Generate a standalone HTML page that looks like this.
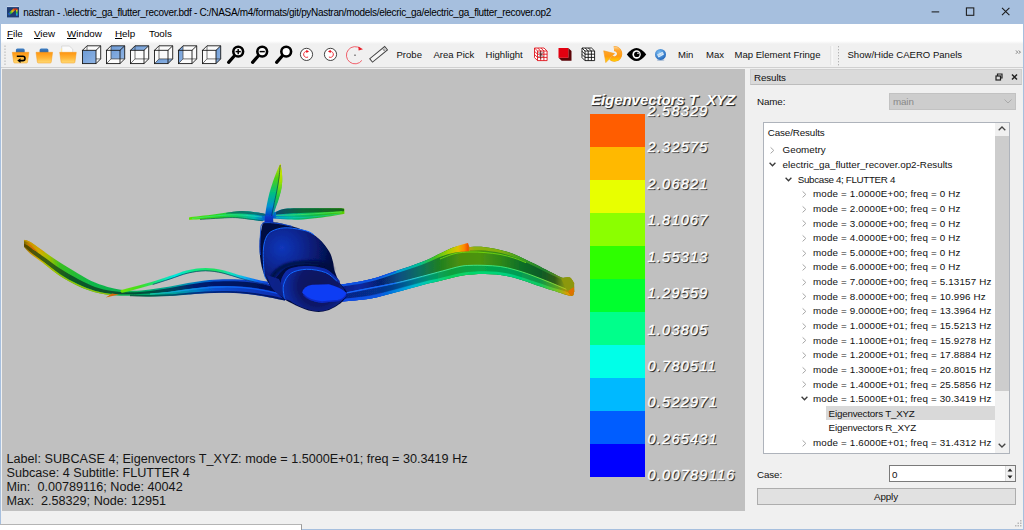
<!DOCTYPE html>
<html><head><meta charset="utf-8"><title>nastran</title>
<style>
*{box-sizing:border-box;margin:0;padding:0}
html,body{width:1024px;height:530px;overflow:hidden;background:#f0f0f0}
body{position:relative;font-family:"Liberation Sans",sans-serif;font-size:11px;color:#000}
.a{position:absolute}
.t{position:absolute;white-space:nowrap;line-height:1;transform-origin:0 0}
.mi{font-size:9.8px;top:28.8px;color:#000}
.tb{font-size:9.55px;top:50.4px;color:#111}
.vt{font-size:12.65px;color:#151515;left:6.5px}
.tr{font-size:9.8px;color:#111}
.lb{font-size:9.8px;color:#111;letter-spacing:-0.12px}
.lg{font-size:14.5px;font-style:italic;color:#fff;-webkit-text-stroke:0.35px #fff;text-shadow:1px 1px 0 #333,1px 1px 1px #333;letter-spacing:1.25px;left:647.5px}
svg{position:absolute;overflow:visible}
</style></head><body>
<div class="a" style="left:0;top:0;width:1024px;height:24px;background:#a6bfde"></div>
<div class="a" style="left:0;top:24px;width:1px;height:506px;background:#a6bfde"></div>
<div class="a" style="left:1023px;top:24px;width:1px;height:506px;background:#a6bfde"></div>
<div class="a" style="left:0;top:529px;width:1024px;height:1px;background:#a6bfde"></div>
<div class="a" style="left:1px;top:24px;width:1022px;height:18.5px;background:#fff"></div>
<div class="a" style="left:1px;top:67px;width:1022px;height:1px;background:#d0d0d0"></div>
<div class="a" style="left:1px;top:41px;width:1022px;height:3px;background:linear-gradient(#fff,#f0f0f0)"></div>
<div class="a" style="left:0;top:524px;width:302px;height:6px;background:#fff;border-top:1px solid #b4b4b4;border-right:1px solid #9a9a9a"></div>
<svg style="left:7px;top:5.6px" width="12" height="11.4" viewBox="0 0 12 11.4"><defs><linearGradient id="ti1" gradientUnits="userSpaceOnUse" x1="1" y1="9" x2="8" y2="2.5"><stop offset="0" stop-color="#2a9a30"/><stop offset="0.15" stop-color="#2040e0"/><stop offset="0.35" stop-color="#28b830"/><stop offset="0.6" stop-color="#d8c818"/><stop offset="0.85" stop-color="#e06010"/><stop offset="1" stop-color="#d02818"/></linearGradient><linearGradient id="ti2" gradientUnits="userSpaceOnUse" x1="0" y1="2.8" x2="0" y2="10"><stop offset="0" stop-color="#e03018"/><stop offset="0.25" stop-color="#e0c818"/><stop offset="0.5" stop-color="#30c030"/><stop offset="0.75" stop-color="#20b8c8"/><stop offset="1" stop-color="#2050e0"/></linearGradient></defs><rect width="12" height="11.4" fill="#1e3c74"/><rect width="12" height="1.1" fill="#c4d4ec"/><path d="M1.4 9L7.6 3.2" stroke="url(#ti1)" stroke-width="2.4" fill="none"/><path d="M9.8 2.8V10" stroke="url(#ti2)" stroke-width="1.7" fill="none"/><path d="M7.4 3L9.8 3.2" stroke="#d83018" stroke-width="1.4" fill="none"/></svg>
<div class="t" style="left:23.3px;top:7.5px;font-size:10px;letter-spacing:-0.315px;color:#000">nastran - .\electric_ga_flutter_recover.bdf - C:/NASA/m4/formats/git/pyNastran/models/elecric_ga/electric_ga_flutter_recover.op2</div>
<svg style="left:920px;top:0" width="104" height="24" viewBox="0 0 104 24" fill="none" stroke="#1a1a1a" stroke-width="1.05"><path d="M11.6 11.9H19.2"/><rect x="46.4" y="7.9" width="7.4" height="7.4"/><path d="M82 7.8l7.4 7.4M89.4 7.8l-7.4 7.4"/></svg>
<div class="t mi" style="left:7px"><u>F</u>ile</div>
<div class="t mi" style="left:34px"><u>V</u>iew</div>
<div class="t mi" style="left:67px"><u>W</u>indow</div>
<div class="t mi" style="left:115px"><u>H</u>elp</div>
<div class="t mi" style="left:149px">Tools</div>
<div class="t tb" style="left:396.5px">Probe</div>
<div class="t tb" style="left:433.5px">Area Pick</div>
<div class="t tb" style="left:485.5px">Highlight</div>
<div class="t tb" style="left:678px">Min</div>
<div class="t tb" style="left:706px">Max</div>
<div class="t tb" style="left:734.5px">Map Element Fringe</div>
<div class="t tb" style="left:847.5px">Show/Hide CAERO Panels</div>
<div class="a" id="view" style="left:2px;top:69px;width:743px;height:442px;background:#c0c0c0"></div>
<div class="a" style="left:590px;top:114px;width:55px;height:33px;background:#ff5d00"></div>
<div class="a" style="left:590px;top:147px;width:55px;height:33px;background:#ffb900"></div>
<div class="a" style="left:590px;top:180px;width:55px;height:33px;background:#e8ff00"></div>
<div class="a" style="left:590px;top:213px;width:55px;height:33px;background:#8bff00"></div>
<div class="a" style="left:590px;top:246px;width:55px;height:33px;background:#2eff00"></div>
<div class="a" style="left:590px;top:279px;width:55px;height:33px;background:#00ff2e"></div>
<div class="a" style="left:590px;top:312px;width:55px;height:33px;background:#00ff8b"></div>
<div class="a" style="left:590px;top:345px;width:55px;height:33px;background:#00ffe8"></div>
<div class="a" style="left:590px;top:378px;width:55px;height:33px;background:#00b9ff"></div>
<div class="a" style="left:590px;top:411px;width:55px;height:33px;background:#005dff"></div>
<div class="a" style="left:590px;top:444px;width:55px;height:33px;background:#0000ff"></div>
<div class="t" style="left:591px;top:91.6px;font-size:15px;font-weight:bold;font-style:italic;color:#fff;text-shadow:1px 1px 0 #333,1px 1px 1px #333;letter-spacing:-0.05px">Eigenvectors T_XYZ</div>
<div class="t lg" style="top:104.0px">2.58329</div>
<div class="t lg" style="top:140.4px">2.32575</div>
<div class="t lg" style="top:176.8px">2.06821</div>
<div class="t lg" style="top:213.3px">1.81067</div>
<div class="t lg" style="top:249.7px">1.55313</div>
<div class="t lg" style="top:286.1px">1.29559</div>
<div class="t lg" style="top:322.5px">1.03805</div>
<div class="t lg" style="top:358.9px">0.780511</div>
<div class="t lg" style="top:395.4px">0.522971</div>
<div class="t lg" style="top:431.8px">0.265431</div>
<div class="t lg" style="top:468.2px">0.00789116</div>
<div class="t vt" style="top:452.5px">Label: SUBCASE 4; Eigenvectors T_XYZ: mode = 1.5000E+01; freq = 30.3419 Hz</div>
<div class="t vt" style="top:466.6px">Subcase: 4 Subtitle: FLUTTER 4</div>
<div class="t vt" style="top:480.6px">Min:&nbsp; 0.00789116; Node: 40042</div>
<div class="t vt" style="top:494.7px">Max:&nbsp; 2.58329; Node: 12951</div>
<div class="a" style="left:750px;top:69px;width:272px;height:16px;background:#dadada;border:1px solid #cfcfcf;border-bottom-color:#bdbdbd"></div>
<div class="t lb" style="left:754px;top:72.5px">Results</div>
<svg style="left:992px;top:71px" width="28" height="12" viewBox="0 0 28 12" fill="none" stroke="#222" stroke-width="1.2"><rect x="4" y="5" width="4.5" height="4"/><path d="M5.5 5V3H10V7H8.5"/><path d="M20 3.5l5 5M25 3.5l-5 5" stroke-width="1.5"/></svg>
<div class="t lb" style="left:757px;top:97px">Name:</div>
<div class="a" style="left:889px;top:93px;width:127px;height:17px;background:#cdcdcd;border:1px solid #c2c2c2"></div>
<div class="t lb" style="left:893px;top:97px;color:#888">main</div>
<svg style="left:1004px;top:99px" width="8" height="5" viewBox="0 0 8 5" fill="none" stroke="#aaa" stroke-width="1"><path d="M0.5 0.5l3.5 3.5l3.5-3.5"/></svg>
<div class="a" style="left:763px;top:122px;width:247px;height:332px;background:#fff;border:1px solid #aeb3bb"></div>
<div class="t tr" style="left:767.8px;top:128px;letter-spacing:-0.12px">Case/Results</div>
<div class="t tr" style="left:782.6px;top:145.4px;letter-spacing:0px">Geometry</div>
<svg style="left:769.7px;top:147.1px" width="5" height="7" viewBox="0 0 5 7" fill="none" stroke="#a6a6a6" stroke-width="1"><path d="M0.6 0.4l3.2 3l-3.2 3"/></svg>
<div class="t tr" style="left:782.6px;top:160.0px;letter-spacing:0px">electric_ga_flutter_recover.op2-Results</div>
<svg style="left:768.9px;top:162.1px" width="7" height="5" viewBox="0 0 7 5" fill="none" stroke="#3a3a3a" stroke-width="1.3"><path d="M0.6 0.7l2.9 3l2.9-3"/></svg>
<div class="t tr" style="left:797.8px;top:174.7px;letter-spacing:-0.34px">Subcase 4; FLUTTER 4</div>
<svg style="left:784.8px;top:176.8px" width="7" height="5" viewBox="0 0 7 5" fill="none" stroke="#3a3a3a" stroke-width="1.3"><path d="M0.6 0.7l2.9 3l2.9-3"/></svg>
<div class="t tr" style="left:813.0px;top:189.3px;letter-spacing:0.17px">mode = 1.0000E+00; freq = 0 Hz</div>
<svg style="left:801.5px;top:191.0px" width="5" height="7" viewBox="0 0 5 7" fill="none" stroke="#a6a6a6" stroke-width="1"><path d="M0.6 0.4l3.2 3l-3.2 3"/></svg>
<div class="t tr" style="left:813.0px;top:203.9px;letter-spacing:0.17px">mode = 2.0000E+00; freq = 0 Hz</div>
<svg style="left:801.5px;top:205.6px" width="5" height="7" viewBox="0 0 5 7" fill="none" stroke="#a6a6a6" stroke-width="1"><path d="M0.6 0.4l3.2 3l-3.2 3"/></svg>
<div class="t tr" style="left:813.0px;top:218.6px;letter-spacing:0.17px">mode = 3.0000E+00; freq = 0 Hz</div>
<svg style="left:801.5px;top:220.2px" width="5" height="7" viewBox="0 0 5 7" fill="none" stroke="#a6a6a6" stroke-width="1"><path d="M0.6 0.4l3.2 3l-3.2 3"/></svg>
<div class="t tr" style="left:813.0px;top:233.2px;letter-spacing:0.17px">mode = 4.0000E+00; freq = 0 Hz</div>
<svg style="left:801.5px;top:234.9px" width="5" height="7" viewBox="0 0 5 7" fill="none" stroke="#a6a6a6" stroke-width="1"><path d="M0.6 0.4l3.2 3l-3.2 3"/></svg>
<div class="t tr" style="left:813.0px;top:247.8px;letter-spacing:0.17px">mode = 5.0000E+00; freq = 0 Hz</div>
<svg style="left:801.5px;top:249.5px" width="5" height="7" viewBox="0 0 5 7" fill="none" stroke="#a6a6a6" stroke-width="1"><path d="M0.6 0.4l3.2 3l-3.2 3"/></svg>
<div class="t tr" style="left:813.0px;top:262.4px;letter-spacing:0.17px">mode = 6.0000E+00; freq = 0 Hz</div>
<svg style="left:801.5px;top:264.1px" width="5" height="7" viewBox="0 0 5 7" fill="none" stroke="#a6a6a6" stroke-width="1"><path d="M0.6 0.4l3.2 3l-3.2 3"/></svg>
<div class="t tr" style="left:813.0px;top:277.1px;letter-spacing:0.17px">mode = 7.0000E+00; freq = 5.13157 Hz</div>
<svg style="left:801.5px;top:278.8px" width="5" height="7" viewBox="0 0 5 7" fill="none" stroke="#a6a6a6" stroke-width="1"><path d="M0.6 0.4l3.2 3l-3.2 3"/></svg>
<div class="t tr" style="left:813.0px;top:291.7px;letter-spacing:0.17px">mode = 8.0000E+00; freq = 10.996 Hz</div>
<svg style="left:801.5px;top:293.4px" width="5" height="7" viewBox="0 0 5 7" fill="none" stroke="#a6a6a6" stroke-width="1"><path d="M0.6 0.4l3.2 3l-3.2 3"/></svg>
<div class="t tr" style="left:813.0px;top:306.3px;letter-spacing:0.17px">mode = 9.0000E+00; freq = 13.3964 Hz</div>
<svg style="left:801.5px;top:308.0px" width="5" height="7" viewBox="0 0 5 7" fill="none" stroke="#a6a6a6" stroke-width="1"><path d="M0.6 0.4l3.2 3l-3.2 3"/></svg>
<div class="t tr" style="left:813.0px;top:321.0px;letter-spacing:0.17px">mode = 1.0000E+01; freq = 15.5213 Hz</div>
<svg style="left:801.5px;top:322.7px" width="5" height="7" viewBox="0 0 5 7" fill="none" stroke="#a6a6a6" stroke-width="1"><path d="M0.6 0.4l3.2 3l-3.2 3"/></svg>
<div class="t tr" style="left:813.0px;top:335.6px;letter-spacing:0.17px">mode = 1.1000E+01; freq = 15.9278 Hz</div>
<svg style="left:801.5px;top:337.3px" width="5" height="7" viewBox="0 0 5 7" fill="none" stroke="#a6a6a6" stroke-width="1"><path d="M0.6 0.4l3.2 3l-3.2 3"/></svg>
<div class="t tr" style="left:813.0px;top:350.2px;letter-spacing:0.17px">mode = 1.2000E+01; freq = 17.8884 Hz</div>
<svg style="left:801.5px;top:351.9px" width="5" height="7" viewBox="0 0 5 7" fill="none" stroke="#a6a6a6" stroke-width="1"><path d="M0.6 0.4l3.2 3l-3.2 3"/></svg>
<div class="t tr" style="left:813.0px;top:364.9px;letter-spacing:0.17px">mode = 1.3000E+01; freq = 20.8015 Hz</div>
<svg style="left:801.5px;top:366.6px" width="5" height="7" viewBox="0 0 5 7" fill="none" stroke="#a6a6a6" stroke-width="1"><path d="M0.6 0.4l3.2 3l-3.2 3"/></svg>
<div class="t tr" style="left:813.0px;top:379.5px;letter-spacing:0.17px">mode = 1.4000E+01; freq = 25.5856 Hz</div>
<svg style="left:801.5px;top:381.2px" width="5" height="7" viewBox="0 0 5 7" fill="none" stroke="#a6a6a6" stroke-width="1"><path d="M0.6 0.4l3.2 3l-3.2 3"/></svg>
<div class="t tr" style="left:813.0px;top:394.1px;letter-spacing:0.17px">mode = 1.5000E+01; freq = 30.3419 Hz</div>
<svg style="left:800.7px;top:396.2px" width="7" height="5" viewBox="0 0 7 5" fill="none" stroke="#3a3a3a" stroke-width="1.3"><path d="M0.6 0.7l2.9 3l2.9-3"/></svg>
<div class="a" style="left:826px;top:406.2px;width:169px;height:13.4px;background:#d9d9d9"></div>
<div class="t tr" style="left:828.6px;top:408.7px;letter-spacing:-0.2px">Eigenvectors T_XYZ</div>
<div class="t tr" style="left:828.6px;top:423.4px;letter-spacing:-0.2px">Eigenvectors R_XYZ</div>
<div class="t tr" style="left:813.0px;top:438.0px;letter-spacing:0.17px">mode = 1.6000E+01; freq = 31.4312 Hz</div>
<svg style="left:801.5px;top:439.7px" width="5" height="7" viewBox="0 0 5 7" fill="none" stroke="#a6a6a6" stroke-width="1"><path d="M0.6 0.4l3.2 3l-3.2 3"/></svg>
<div class="a" style="left:995px;top:123px;width:14px;height:330px;background:#f0f0f0"></div>
<div class="a" style="left:995px;top:136px;width:14px;height:255px;background:#cdcdcd"></div>
<svg style="left:998px;top:126px" width="8" height="5" viewBox="0 0 8 5" fill="none" stroke="#444" stroke-width="1.3"><path d="M0.7 4.3l3.3-3.3l3.3 3.3"/></svg>
<svg style="left:998px;top:443px" width="8" height="5" viewBox="0 0 8 5" fill="none" stroke="#444" stroke-width="1.3"><path d="M0.7 0.7l3.3 3.3l3.3-3.3"/></svg>
<div class="t lb" style="left:757px;top:469.5px">Case:</div>
<div class="a" style="left:889px;top:465px;width:127px;height:17px;background:#fff;border:1px solid #7a7a7a"></div>
<div class="t lb" style="left:892px;top:469.5px">0</div>
<div class="a" style="left:1005px;top:466px;width:10px;height:15px;background:#f0f0f0;border-left:1px solid #ddd"></div>
<svg style="left:1007px;top:468px" width="6" height="11" viewBox="0 0 6 11" fill="#222"><path d="M3 0.5l2.5 3h-5zM3 10.5l2.5-3h-5z"/></svg>
<div class="a" style="left:757px;top:488px;width:259px;height:17px;background:#e1e1e1;border:1px solid #adadad"></div>
<div class="t lb" style="left:874px;top:492px">Apply</div>
<svg style="left:1014px;top:520px" width="8" height="8" viewBox="0 0 8 8" fill="#b8b8b8"><rect x="6" y="0" width="1.5" height="1.5"/><rect x="3.5" y="2.5" width="1.5" height="1.5"/><rect x="6" y="2.5" width="1.5" height="1.5"/><rect x="1" y="5" width="1.5" height="1.5"/><rect x="3.5" y="5" width="1.5" height="1.5"/><rect x="6" y="5" width="1.5" height="1.5"/></svg>
<svg style="left:0;top:43px" width="1024" height="26" viewBox="0 43 1024 26"><defs>
<linearGradient id="fo" x1="0" y1="0" x2="0" y2="1"><stop offset="0" stop-color="#ff9410"/><stop offset="0.55" stop-color="#ffb638"/><stop offset="1" stop-color="#ffdc78"/></linearGradient>
<linearGradient id="bl" x1="0" y1="0" x2="0" y2="1"><stop offset="0" stop-color="#3f7fc4"/><stop offset="1" stop-color="#2a5e9c"/></linearGradient>
<linearGradient id="cb" x1="0" y1="0" x2="1" y2="1"><stop offset="0" stop-color="#6d9bd6"/><stop offset="1" stop-color="#8fb4e4"/></linearGradient>
<linearGradient id="oa" gradientUnits="userSpaceOnUse" x1="0" y1="46" x2="0" y2="63"><stop offset="0" stop-color="#ffd9a0"/><stop offset="0.25" stop-color="#ffa630"/><stop offset="0.6" stop-color="#ff9a10"/><stop offset="1" stop-color="#ffe000"/></linearGradient>
<radialGradient id="gl" cx="0.4" cy="0.35" r="0.7"><stop offset="0" stop-color="#7fc0f4"/><stop offset="1" stop-color="#1c62b8"/></radialGradient>
</defs><rect x="4.5" y="45.5" width="1" height="1.4" fill="#b0b0b0"/><rect x="4.5" y="48.5" width="1" height="1.4" fill="#b0b0b0"/><rect x="4.5" y="51.5" width="1" height="1.4" fill="#b0b0b0"/><rect x="4.5" y="54.5" width="1" height="1.4" fill="#b0b0b0"/><rect x="4.5" y="57.5" width="1" height="1.4" fill="#b0b0b0"/><rect x="4.5" y="60.5" width="1" height="1.4" fill="#b0b0b0"/><rect x="4.5" y="63.5" width="1" height="1.4" fill="#b0b0b0"/><rect x="838" y="46" width="1" height="1.4" fill="#b4b4b4"/><rect x="838" y="49" width="1" height="1.4" fill="#b4b4b4"/><rect x="838" y="52" width="1" height="1.4" fill="#b4b4b4"/><rect x="838" y="55" width="1" height="1.4" fill="#b4b4b4"/><rect x="838" y="58" width="1" height="1.4" fill="#b4b4b4"/><rect x="838" y="61" width="1" height="1.4" fill="#b4b4b4"/><rect x="838" y="64" width="1" height="1.4" fill="#b4b4b4"/><rect x="830.5" y="46" width="1" height="19" fill="#d8d8d8"/><rect x="831.5" y="46" width="1" height="19" fill="#fff"/><path d="M15.9 53V50q0-1.5 1.5-1.5h5.8q1.5 0 1.5 1.5V53z" fill="url(#bl)"/><path d="M12.3 52.3H28.900000000000002L27.5 62.2q-.1 .8-1 .8H14.700000000000001q-.9 0-1-.8z" fill="url(#fo)" stroke="#f59a1c" stroke-width="0.5"/><path d="M16.8 56.2H22.8q2.2 0 2.2 2.2t-2.2 2.2H19.8" fill="none" stroke="#000" stroke-width="1.6"/><path d="M20.5 58.3v4.6l-3.2-2.3z" fill="#000"/><path d="M39.6 53V50q0-1.5 1.5-1.5h5.8q1.5 0 1.5 1.5V53z" fill="url(#bl)"/><path d="M36 52.3H52.6L51.2 62.2q-.1 .8-1 .8H38.4q-.9 0-1-.8z" fill="url(#fo)" stroke="#f59a1c" stroke-width="0.5"/><path d="M61.7 53V46h7.5l3.5 3V53z" fill="#fbfbfb" stroke="#cfcfcf" stroke-width="0.7"/><path d="M60.900000000000006 53V48.5h1.2V53z" fill="#ffe9a0"/><path d="M59.7 52.3H76.30000000000001L74.9 62.2q-.1 .8-1 .8H62.1q-.9 0-1-.8z" fill="url(#fo)" stroke="#f59a1c" stroke-width="0.5"/><polygon points="82.5,50.3 87,45.8 100.7,45.8 100.7,58.9 96,63.599999999999994 82.5,63.599999999999994" fill="#fbfbfb"/><g fill="none" stroke="#3a3a3a" stroke-width="0.7"><path d="M87 45.8V58.9H100.7M82.5 63.599999999999994L87 58.9"/></g><polygon points="82.5,50.3 96,50.3 96,63.599999999999994 82.5,63.599999999999994" fill="url(#cb)"/><g fill="none" stroke="#1a1a1a" stroke-width="0.9"><rect x="82.5" y="50.3" width="13.5" height="13.299999999999997"/><path d="M82.5 50.3L87 45.8M96 50.3L100.7 45.8M96 63.599999999999994L100.7 58.9"/><path d="M87 45.8H100.7V58.9"/></g><polygon points="106.5,50.3 111,45.8 124.7,45.8 124.7,58.9 120,63.599999999999994 106.5,63.599999999999994" fill="#fbfbfb"/><polygon points="111,45.8 124.7,45.8 124.7,58.9 111,58.9" fill="url(#cb)"/><g fill="none" stroke="#3a3a3a" stroke-width="0.7"><path d="M111 45.8V58.9H124.7M106.5 63.599999999999994L111 58.9"/></g><g fill="none" stroke="#1a1a1a" stroke-width="0.9"><rect x="106.5" y="50.3" width="13.5" height="13.299999999999997"/><path d="M106.5 50.3L111 45.8M120 50.3L124.7 45.8M120 63.599999999999994L124.7 58.9"/><path d="M111 45.8H124.7V58.9"/></g><polygon points="130.5,50.3 135,45.8 148.7,45.8 148.7,58.9 144,63.599999999999994 130.5,63.599999999999994" fill="#fbfbfb"/><polygon points="130.5,50.3 144,50.3 148.7,45.8 135,45.8" fill="url(#cb)"/><g fill="none" stroke="#3a3a3a" stroke-width="0.7"><path d="M135 45.8V58.9H148.7M130.5 63.599999999999994L135 58.9"/></g><g fill="none" stroke="#1a1a1a" stroke-width="0.9"><rect x="130.5" y="50.3" width="13.5" height="13.299999999999997"/><path d="M130.5 50.3L135 45.8M144 50.3L148.7 45.8M144 63.599999999999994L148.7 58.9"/><path d="M135 45.8H148.7V58.9"/></g><polygon points="154.5,50.3 159,45.8 172.7,45.8 172.7,58.9 168,63.599999999999994 154.5,63.599999999999994" fill="#fbfbfb"/><polygon points="154.5,63.599999999999994 168,63.599999999999994 172.7,58.9 159,58.9" fill="url(#cb)"/><g fill="none" stroke="#3a3a3a" stroke-width="0.7"><path d="M159 45.8V58.9H172.7M154.5 63.599999999999994L159 58.9"/></g><g fill="none" stroke="#1a1a1a" stroke-width="0.9"><rect x="154.5" y="50.3" width="13.5" height="13.299999999999997"/><path d="M154.5 50.3L159 45.8M168 50.3L172.7 45.8M168 63.599999999999994L172.7 58.9"/><path d="M159 45.8H172.7V58.9"/></g><polygon points="178.5,50.3 183,45.8 196.7,45.8 196.7,58.9 192,63.599999999999994 178.5,63.599999999999994" fill="#fbfbfb"/><polygon points="178.5,50.3 183,45.8 183,58.9 178.5,63.599999999999994" fill="url(#cb)"/><g fill="none" stroke="#3a3a3a" stroke-width="0.7"><path d="M183 45.8V58.9H196.7M178.5 63.599999999999994L183 58.9"/></g><g fill="none" stroke="#1a1a1a" stroke-width="0.9"><rect x="178.5" y="50.3" width="13.5" height="13.299999999999997"/><path d="M178.5 50.3L183 45.8M192 50.3L196.7 45.8M192 63.599999999999994L196.7 58.9"/><path d="M183 45.8H196.7V58.9"/></g><polygon points="202.5,50.3 207,45.8 220.7,45.8 220.7,58.9 216,63.599999999999994 202.5,63.599999999999994" fill="#fbfbfb"/><polygon points="216,50.3 220.7,45.8 220.7,58.9 216,63.599999999999994" fill="url(#cb)"/><g fill="none" stroke="#3a3a3a" stroke-width="0.7"><path d="M207 45.8V58.9H220.7M202.5 63.599999999999994L207 58.9"/></g><g fill="none" stroke="#1a1a1a" stroke-width="0.9"><rect x="202.5" y="50.3" width="13.5" height="13.299999999999997"/><path d="M202.5 50.3L207 45.8M216 50.3L220.7 45.8M216 63.599999999999994L220.7 58.9"/><path d="M207 45.8H220.7V58.9"/></g><path d="M234.0 56.2L228.6 62.400000000000006" stroke="#000" stroke-width="3.2" stroke-linecap="round"/><circle cx="238.2" cy="51.6" r="4.9" fill="#fff" stroke="#000" stroke-width="2.6"/><path d="M235.6 51.6H240.79999999999998" stroke="#000" stroke-width="1.5"/><path d="M238.2 49.0V54.2" stroke="#000" stroke-width="1.5"/><path d="M258.0 56.2L252.6 62.400000000000006" stroke="#000" stroke-width="3.2" stroke-linecap="round"/><circle cx="262.2" cy="51.6" r="4.9" fill="#fff" stroke="#000" stroke-width="2.6"/><path d="M259.59999999999997 51.6H264.8" stroke="#000" stroke-width="1.5"/><path d="M282.0 56.2L276.59999999999997 62.400000000000006" stroke="#000" stroke-width="3.2" stroke-linecap="round"/><circle cx="286.2" cy="51.6" r="4.9" fill="#fff" stroke="#000" stroke-width="2.6"/><circle cx="306.5" cy="54.4" r="6.1" fill="#fff" stroke="#222" stroke-width="0.85"/><g><path d="M306.9 51.4A3 3 0 1 0 308.1 57.0" fill="none" stroke="#f0303a" stroke-width="1"/><path d="M306.3 49.699999999999996v3.4l2.7-1.7z" fill="#e8101c"/></g><circle cx="330.5" cy="54.4" r="6.1" fill="#fff" stroke="#222" stroke-width="0.85"/><g transform="translate(661.0 0) scale(-1 1)"><path d="M330.9 51.4A3 3 0 1 0 332.1 57.0" fill="none" stroke="#f0303a" stroke-width="1"/><path d="M330.3 49.699999999999996v3.4l2.7-1.7z" fill="#e8101c"/></g><path d="M361.9 60.400000000000006A8.6 8.6 0 1 1 360.6 48.7" fill="none" stroke="#f0505c" stroke-width="0.9"/><path d="M358.4 46.6l4.6 2.6l-4.4 1.4z" fill="#e8202a"/><rect x="354.4" y="54.6" width="1.2" height="1.2" fill="#333"/><g transform="rotate(-39.5 378.6 54.3)"><rect x="368.9" y="52.1" width="19.4" height="4.4" fill="#f6f6f6" stroke="#444" stroke-width="1"/><circle cx="385.8" cy="54.3" r="0.9" fill="none" stroke="#555" stroke-width="0.6"/></g><polygon points="534.5,48 544.0,48 547.1,51 547.1,60.6 537.5,60.6 534.5,57.6" fill="#fff"/><g fill="none" stroke="#e0141c" stroke-width="0.9"><path d="M537.5 51V60.6M537.5 51.0H547.1"/><path d="M540.7 51V60.6M537.5 54.2H547.1"/><path d="M543.9 51V60.6M537.5 57.4H547.1"/><path d="M547.1 51V60.6M537.5 60.6H547.1"/><path d="M534.5 48H544.0L547.1 51M534.5 48V57.6L537.5 60.6M534.5 48L537.5 51"/><path d="M537.7 48l3 3M540.9 48l3 3M534.5 51.2l3 3M534.5 54.4l3 3"/></g><g fill="none" stroke="#333" stroke-width="0.7"><path d="M538.5 52l5 5M543.5 52l-5 5M540.7 51v8"/></g><polygon points="568.3,48 571.5,51 571.5,60.7 561.7,60.7 558.5,57.8 568.3,57.8" fill="#5c0508"/><rect x="558.5" y="48" width="9.8" height="9.8" fill="#e30010"/><polygon points="582,48 591.5,48 594.6,51 594.6,60.6 585,60.6 582,57.6" fill="#fff"/><g fill="none" stroke="#111" stroke-width="0.9"><path d="M585.0 51V60.6M585 51.0H594.6"/><path d="M588.2 51V60.6M585 54.2H594.6"/><path d="M591.4 51V60.6M585 57.4H594.6"/><path d="M594.6 51V60.6M585 60.6H594.6"/><path d="M582 48H591.5L594.6 51M582 48V57.6L585 60.6M582 48L585 51"/><path d="M585.2 48l3 3M588.4 48l3 3M582 51.2l3 3M582 54.4l3 3"/></g><path d="M613.95 48.62A5.2 5.2 0 1 1 611.06 57.78" fill="none" stroke="#f79a18" stroke-width="5.2"/><path d="M613.95 48.62A5.2 5.2 0 1 1 611.06 57.78" fill="none" stroke="url(#oa)" stroke-width="4.4"/><path d="M603.7 50.8L614.6 53.6L605.8 62.6Z" fill="url(#oa)" stroke="#f79a18" stroke-width="0.6" stroke-linejoin="round"/><path d="M626.8 54.5Q636.5 41.4 646.2 54.5Q636.5 67.6 626.8 54.5z" fill="#000"/><circle cx="636.6" cy="54.5" r="4.2" fill="#fff"/><circle cx="636.8" cy="54.4" r="2.7" fill="#000"/><circle cx="638" cy="53.2" r="0.8" fill="#fff"/><ellipse cx="660.6" cy="60" rx="3.8" ry="0.9" fill="#a8bcd4"/><circle cx="660.5" cy="54.4" r="5.5" fill="url(#gl)"/><path d="M657 54.6l5.6-2.8l1.4 2.8l-5.4 2.8z" fill="#dcecfa"/><path d="M657.6 54.8l2.6.6l2.6-2.8" fill="none" stroke="#7aa8d8" stroke-width="0.5"/><g fill="none" stroke="#555" stroke-width="0.8"><path d="M1016 50.5l1.6 1.6l-1.6 1.6M1018.8 50.5l1.6 1.6l-1.6 1.6"/></g></svg>
<svg style="left:0;top:0" width="1024" height="530" viewBox="0 0 1024 530"><defs><linearGradient id="lw" gradientUnits="userSpaceOnUse" x1="24" y1="0" x2="280" y2="0"><stop offset="0.0" stop-color="#7a6800"/><stop offset="0.023" stop-color="#c89000"/><stop offset="0.062" stop-color="#d0b000"/><stop offset="0.102" stop-color="#98c000"/><stop offset="0.141" stop-color="#38c020"/><stop offset="0.258" stop-color="#10b848"/><stop offset="0.375" stop-color="#10b050"/><stop offset="0.492" stop-color="#00a870"/><stop offset="0.59" stop-color="#00a0a0"/><stop offset="0.668" stop-color="#0080c0"/><stop offset="0.746" stop-color="#0850d0"/><stop offset="1.0" stop-color="#0a2cb0"/></linearGradient><linearGradient id="lwd" gradientUnits="userSpaceOnUse" x1="24" y1="0" x2="280" y2="0"><stop offset="0.0" stop-color="#5c4800"/><stop offset="0.082" stop-color="#3c6010"/><stop offset="0.199" stop-color="#085828"/><stop offset="0.375" stop-color="#085030"/><stop offset="0.492" stop-color="#005040"/><stop offset="0.59" stop-color="#004060"/><stop offset="0.668" stop-color="#041c70"/><stop offset="1.0" stop-color="#050e50"/></linearGradient><linearGradient id="lwb" gradientUnits="userSpaceOnUse" x1="24" y1="0" x2="280" y2="0"><stop offset="0" stop-color="#30c020"/><stop offset="0.5" stop-color="#10c0a0"/><stop offset="0.62" stop-color="#10a0e0"/><stop offset="0.72" stop-color="#0c70f0"/><stop offset="1" stop-color="#0c50f0"/></linearGradient><linearGradient id="lfl" gradientUnits="userSpaceOnUse" x1="118" y1="0" x2="268" y2="0"><stop offset="0.0" stop-color="#70e000"/><stop offset="0.147" stop-color="#40e020"/><stop offset="0.267" stop-color="#10e090"/><stop offset="0.38" stop-color="#00e8e0"/><stop offset="0.513" stop-color="#10e880"/><stop offset="0.647" stop-color="#20e060"/><stop offset="0.76" stop-color="#10e0c0"/><stop offset="0.847" stop-color="#10b0f0"/><stop offset="0.933" stop-color="#1060f0"/><stop offset="1.0" stop-color="#0840d0"/></linearGradient><linearGradient id="rw" gradientUnits="userSpaceOnUse" x1="340" y1="0" x2="575" y2="0"><stop offset="0.0" stop-color="#0a38c8"/><stop offset="0.17" stop-color="#0848d0"/><stop offset="0.255" stop-color="#0090c8"/><stop offset="0.34" stop-color="#00b088"/><stop offset="0.426" stop-color="#20a828"/><stop offset="0.596" stop-color="#40a020"/><stop offset="0.766" stop-color="#109838"/><stop offset="0.915" stop-color="#30a020"/><stop offset="1.0" stop-color="#a09010"/></linearGradient><linearGradient id="rwu" gradientUnits="userSpaceOnUse" x1="340" y1="0" x2="575" y2="0"><stop offset="0.0" stop-color="#081c80"/><stop offset="0.085" stop-color="#0828a0"/><stop offset="0.17" stop-color="#062070"/><stop offset="0.255" stop-color="#085080"/><stop offset="0.34" stop-color="#0c7060"/><stop offset="0.426" stop-color="#208020"/><stop offset="0.511" stop-color="#4c9010"/><stop offset="0.596" stop-color="#4c9410"/><stop offset="0.681" stop-color="#308818"/><stop offset="0.766" stop-color="#107028"/><stop offset="0.851" stop-color="#0c5c28"/><stop offset="0.915" stop-color="#305c18"/><stop offset="0.962" stop-color="#90a010"/><stop offset="1.0" stop-color="#a09010"/></linearGradient><linearGradient id="rwl" gradientUnits="userSpaceOnUse" x1="340" y1="0" x2="575" y2="0"><stop offset="0.0" stop-color="#0a38c8"/><stop offset="0.17" stop-color="#0848c0"/><stop offset="0.255" stop-color="#0070b8"/><stop offset="0.319" stop-color="#0090a0"/><stop offset="0.383" stop-color="#00a070"/><stop offset="0.468" stop-color="#10a040"/><stop offset="0.596" stop-color="#08a848"/><stop offset="0.723" stop-color="#00a058"/><stop offset="0.851" stop-color="#109848"/><stop offset="0.928" stop-color="#60a020"/><stop offset="0.97" stop-color="#c08800"/><stop offset="1.0" stop-color="#e07800"/></linearGradient><linearGradient id="rwlb" gradientUnits="userSpaceOnUse" x1="340" y1="0" x2="575" y2="0"><stop offset="0.0" stop-color="#0c48e8"/><stop offset="0.17" stop-color="#0858e0"/><stop offset="0.255" stop-color="#0090e0"/><stop offset="0.319" stop-color="#00b8d0"/><stop offset="0.383" stop-color="#00d0a0"/><stop offset="0.468" stop-color="#10d060"/><stop offset="0.596" stop-color="#00d870"/><stop offset="0.723" stop-color="#00d080"/><stop offset="0.851" stop-color="#10c860"/><stop offset="0.928" stop-color="#80c020"/><stop offset="0.97" stop-color="#e09800"/><stop offset="1.0" stop-color="#f07800"/></linearGradient><linearGradient id="rwdk" gradientUnits="userSpaceOnUse" x1="343" y1="0" x2="442" y2="0"><stop offset="0" stop-color="#051a70" stop-opacity="0.75"/><stop offset="0.5" stop-color="#052a70" stop-opacity="0.6"/><stop offset="1" stop-color="#056060" stop-opacity="0"/></linearGradient><linearGradient id="rwml" gradientUnits="userSpaceOnUse" x1="340" y1="0" x2="575" y2="0"><stop offset="0" stop-color="#2070ff"/><stop offset="0.2" stop-color="#3090ff"/><stop offset="0.32" stop-color="#40d8e0"/><stop offset="0.45" stop-color="#50f0a0"/><stop offset="0.7" stop-color="#40f080"/><stop offset="0.9" stop-color="#90f040"/><stop offset="1" stop-color="#e0d020"/></linearGradient><linearGradient id="rtop" gradientUnits="userSpaceOnUse" x1="340" y1="0" x2="575" y2="0"><stop offset="0.0" stop-color="#0c50e0"/><stop offset="0.17" stop-color="#0c60e0"/><stop offset="0.255" stop-color="#00a0d0"/><stop offset="0.34" stop-color="#00c090"/><stop offset="0.404" stop-color="#40c020"/><stop offset="0.46" stop-color="#a0d000"/><stop offset="0.502" stop-color="#e0c000"/><stop offset="0.528" stop-color="#ff8800"/><stop offset="0.545" stop-color="#f05000"/><stop offset="0.553" stop-color="#b0a810"/><stop offset="0.574" stop-color="#90b010"/><stop offset="0.681" stop-color="#80b010"/><stop offset="0.766" stop-color="#40a020"/><stop offset="0.872" stop-color="#208030"/><stop offset="0.945" stop-color="#708c18"/><stop offset="1.0" stop-color="#a09010"/></linearGradient><linearGradient id="hs" gradientUnits="userSpaceOnUse" x1="189" y1="0" x2="345" y2="0"><stop offset="0.0" stop-color="#58e000"/><stop offset="0.167" stop-color="#30d820"/><stop offset="0.314" stop-color="#10c860"/><stop offset="0.417" stop-color="#00b8b0"/><stop offset="0.494" stop-color="#0858d0"/><stop offset="0.532" stop-color="#0848d0"/><stop offset="0.571" stop-color="#0090c0"/><stop offset="0.66" stop-color="#00b890"/><stop offset="0.788" stop-color="#10b850"/><stop offset="0.904" stop-color="#30c020"/><stop offset="1.0" stop-color="#60d000"/></linearGradient><linearGradient id="hsd" gradientUnits="userSpaceOnUse" x1="275" y1="0" x2="345" y2="0"><stop offset="0" stop-color="#084870"/><stop offset="0.4" stop-color="#0c6838"/><stop offset="1" stop-color="#186818"/></linearGradient><linearGradient id="fin" gradientUnits="userSpaceOnUse" x1="0" y1="163" x2="0" y2="223"><stop offset="0" stop-color="#d8e000"/><stop offset="0.25" stop-color="#50d010"/><stop offset="0.5" stop-color="#00c080"/><stop offset="0.72" stop-color="#0090d0"/><stop offset="0.9" stop-color="#0838c8"/><stop offset="1" stop-color="#0828b0"/></linearGradient><linearGradient id="finr" gradientUnits="userSpaceOnUse" x1="0" y1="163" x2="0" y2="216"><stop offset="0" stop-color="#e8e800"/><stop offset="0.35" stop-color="#a0e000"/><stop offset="0.65" stop-color="#20c840"/><stop offset="1" stop-color="#0080c0"/></linearGradient><radialGradient id="fus" gradientUnits="userSpaceOnUse" cx="282" cy="248" r="52"><stop offset="0" stop-color="#1236ba"/><stop offset="0.35" stop-color="#0b2896"/><stop offset="0.7" stop-color="#07186a"/><stop offset="1" stop-color="#040c40"/></radialGradient><radialGradient id="cow" gradientUnits="userSpaceOnUse" cx="318" cy="286" r="36"><stop offset="0" stop-color="#07125a"/><stop offset="0.55" stop-color="#081868"/><stop offset="0.85" stop-color="#0c2898"/><stop offset="1" stop-color="#0c2ca8"/></radialGradient><filter id="b1" x="-5%" y="-20%" width="110%" height="140%"><feGaussianBlur stdDeviation="0.6"/></filter><filter id="b2" x="-5%" y="-20%" width="110%" height="140%"><feGaussianBlur stdDeviation="1.2"/></filter></defs><g filter="url(#b1)"><path d="M189.0 217.4C193.3 216.9 206.2 215.4 215.0 214.3C223.8 213.2 234.3 211.3 241.5 211.0C248.7 210.7 253.9 212.1 258.0 212.6C262.1 213.1 263.2 214.1 266.0 214.0C268.8 213.9 271.8 212.9 275.0 212.0C278.2 211.1 279.7 209.3 285.5 208.7C291.3 208.1 301.2 208.3 310.0 208.2C318.8 208.1 332.3 208.2 338.0 208.3C343.7 208.4 343.3 208.7 344.4 208.8L344.4 213.8C343.3 214.0 341.7 214.4 338.0 215.0C334.3 215.6 327.8 216.7 322.0 217.4C316.2 218.1 308.7 219.0 303.0 219.4C297.3 219.8 293.3 219.7 288.0 219.6C282.7 219.5 275.6 218.4 271.4 218.6C267.2 218.8 266.2 220.9 262.6 221.0C259.0 221.1 255.0 219.9 250.0 219.4C245.0 218.9 239.0 217.9 232.7 217.8C226.4 217.7 219.3 218.5 212.0 218.8C204.7 219.1 192.8 219.6 189.0 219.8Z" fill="url(#hs)"/><path d="M276.0 212.0C277.6 211.4 279.8 209.3 285.5 208.7C291.2 208.1 301.2 208.3 310.0 208.2C318.8 208.1 332.3 208.2 338.0 208.3C343.7 208.4 343.0 208.7 344.0 208.8L344.0 211.2C340.8 211.3 332.3 211.7 325.0 212.0C317.7 212.3 308.2 212.6 300.0 213.0C291.8 213.4 280.0 214.2 276.0 214.4Z" fill="url(#hsd)"/><path d="M226.0 212.9C228.6 212.6 236.2 211.1 241.5 211.0C246.8 210.9 253.9 212.1 258.0 212.6C262.1 213.1 264.7 213.8 266.0 214.0L266.0 216.0C262.5 215.6 251.7 214.2 245.0 213.8C238.3 213.4 229.2 213.6 226.0 213.6Z" fill="#086868" opacity="0.85"/><path d="M200.0 219.4C205.4 219.1 224.4 217.6 232.7 217.6C241.0 217.6 245.0 218.7 250.0 219.2C255.0 219.7 260.5 220.5 262.6 220.8" stroke="#0a5a50" stroke-width="0.9" fill="none" opacity="0.8"/><path d="M192.0 218.4C198.7 217.8 220.3 215.0 232.0 214.8C243.7 214.6 257.0 216.6 262.0 217.0" stroke="#30f0c0" stroke-width="0.7" fill="none" opacity="0.7"/><path d="M276.0 215.4C280.8 215.2 294.0 215.0 305.0 214.4C316.0 213.8 335.8 212.2 342.0 211.8" stroke="#50f060" stroke-width="0.8" fill="none" opacity="0.8"/><path d="M276.0 217.6C280.8 217.6 294.3 218.0 305.0 217.4C315.7 216.8 334.2 214.6 340.0 214.0" stroke="#10d0d0" stroke-width="0.8" fill="none" opacity="0.6"/><path d="M264.4 223C264.6 221.2 265.0 216.0 265.6 212.0C266.2 208.0 267.1 203.2 268.0 199.0C268.9 194.8 270.0 190.8 271.2 187.0C272.4 183.2 273.8 179.2 275.0 176.0C276.2 172.8 277.3 170.1 278.2 168.0C279.1 165.9 280.1 164.2 280.5 163.4L281.8 171C281.9 172.7 282.3 177.8 282.2 181.0C282.1 184.2 281.6 187.0 281.0 190.0C280.4 193.0 279.2 196.3 278.4 199.0C277.6 201.7 276.9 203.4 276.0 206.0C275.1 208.6 273.6 212.0 273.2 214.8C272.8 217.6 273.4 221.6 273.4 223.0Z" fill="url(#fin)"/><path d="M272.4 214.0C272.7 212.3 273.6 208.0 274.4 204.0C275.2 200.0 276.5 194.8 277.4 190.0C278.3 185.2 279.1 179.4 279.6 175.0C280.1 170.6 280.4 165.3 280.5 163.4L280.5 163.4C280.8 165.5 282.0 171.9 282.2 176.0C282.4 180.1 282.2 184.2 281.6 188.0C281.0 191.8 279.9 195.3 278.8 199.0C277.7 202.7 275.9 207.2 275.0 210.0C274.1 212.8 273.7 215.0 273.4 216.0Z" fill="url(#finr)"/><path d="M280.2 165.0C280.0 167.2 279.6 173.5 279.0 178.0C278.4 182.5 277.5 187.3 276.6 192.0C275.7 196.7 274.4 202.0 273.6 206.0C272.8 210.0 271.9 214.3 271.6 216.0" stroke="#083048" stroke-width="0.8" fill="none" opacity="0.75"/><path d="M24.0 240.0C25.0 240.3 26.7 239.9 30.0 241.8C33.3 243.7 39.0 248.2 44.0 251.6C49.0 255.0 54.3 258.9 60.0 262.5C65.7 266.1 72.2 270.1 78.0 273.4C83.8 276.7 89.3 280.1 95.0 282.5C100.7 284.9 106.2 286.6 112.0 288.0C117.8 289.4 123.7 290.6 130.0 290.8C136.3 291.1 143.3 290.2 150.0 289.5C156.7 288.8 163.7 287.7 170.0 286.6C176.3 285.5 182.2 284.1 188.0 283.1C193.8 282.1 199.2 281.1 205.0 280.5C210.8 279.9 217.2 279.4 223.0 279.3C228.8 279.2 234.2 279.2 240.0 279.6C245.8 280.0 253.0 280.7 258.0 281.4C263.0 282.1 265.5 282.9 270.0 284.0C274.5 285.1 282.5 287.3 285.0 288.0L285.0 300.5C282.5 300.0 274.5 298.2 270.0 297.4C265.5 296.5 263.0 296.1 258.0 295.4C253.0 294.7 245.8 293.7 240.0 293.3C234.2 292.9 228.8 292.8 223.0 292.8C217.2 292.8 210.8 293.0 205.0 293.3C199.2 293.6 193.8 294.1 188.0 294.5C182.2 294.9 176.3 295.5 170.0 295.8C163.7 296.1 156.7 296.3 150.0 296.3C143.3 296.3 136.3 296.0 130.0 295.8C123.7 295.6 117.8 295.8 112.0 295.2C106.2 294.6 100.7 293.8 95.0 292.3C89.3 290.8 83.8 288.7 78.0 286.0C72.2 283.3 65.7 279.7 60.0 276.0C54.3 272.3 49.0 267.6 44.0 263.8C39.0 260.0 33.3 256.2 30.0 253.4C26.7 250.6 25.0 248.1 24.0 247.0Z" fill="url(#lw)"/><path d="M24.0 243.5C25.0 244.1 26.7 244.8 30.0 247.0C33.3 249.3 39.0 253.5 44.0 257.1C49.0 260.7 54.3 264.9 60.0 268.6C65.7 272.2 72.2 276.0 78.0 279.1C83.8 282.1 89.3 284.9 95.0 286.9C100.7 288.9 106.2 290.0 112.0 290.9C117.8 291.8 123.7 292.3 130.0 292.3C136.3 292.3 143.3 291.6 150.0 290.9C156.7 290.1 163.7 289.0 170.0 288.0C176.3 287.0 182.2 285.8 188.0 284.8C193.8 283.9 199.2 282.9 205.0 282.3C210.8 281.7 217.2 281.3 223.0 281.2C228.8 281.1 234.2 281.2 240.0 281.5C245.8 281.9 253.0 282.6 258.0 283.4C263.0 284.1 265.5 284.8 270.0 285.9C274.5 286.9 282.5 289.1 285.0 289.8L285.0 294.2C282.5 293.7 274.5 291.7 270.0 290.7C265.5 289.7 263.0 289.1 258.0 288.4C253.0 287.7 245.8 286.8 240.0 286.5C234.2 286.1 228.8 286.0 223.0 286.1C217.2 286.1 210.8 286.4 205.0 286.9C199.2 287.4 193.8 288.2 188.0 289.0C182.2 289.8 176.3 290.9 170.0 291.7C163.7 292.4 156.7 293.1 150.0 293.6C143.3 294.0 136.3 294.3 130.0 294.3C123.7 294.3 117.8 294.3 112.0 293.8C106.2 293.2 100.7 292.4 95.0 290.8C89.3 289.2 83.8 286.9 78.0 284.1C72.2 281.3 65.7 277.7 60.0 274.0C54.3 270.3 49.0 265.7 44.0 262.0C39.0 258.3 33.3 254.3 30.0 251.7C26.7 249.0 25.0 247.2 24.0 246.3Z" fill="url(#lwd)"/><path d="M150.0 294.1C153.3 293.8 163.7 293.0 170.0 292.3C176.3 291.6 182.2 290.6 188.0 289.8C193.8 289.1 199.2 288.3 205.0 287.8C210.8 287.3 217.2 287.1 223.0 287.0C228.8 286.9 234.2 287.0 240.0 287.4C245.8 287.8 253.0 288.7 258.0 289.4C263.0 290.1 265.5 290.7 270.0 291.6C274.5 292.6 282.5 294.5 285.0 295.1" stroke="url(#lwb)" stroke-width="1.3" fill="none"/><path d="M130.0 295.4C133.3 295.5 143.3 295.9 150.0 295.8C156.7 295.8 163.7 295.5 170.0 295.2C176.3 294.8 182.2 294.2 188.0 293.7C193.8 293.2 199.2 292.7 205.0 292.4C210.8 292.1 217.2 291.9 223.0 291.9C228.8 291.8 234.2 291.9 240.0 292.3C245.8 292.8 253.0 293.7 258.0 294.4C263.0 295.1 265.5 295.6 270.0 296.5C274.5 297.3 282.5 299.1 285.0 299.6" stroke="url(#lwd)" stroke-width="1.8" fill="none" opacity="0.8"/><path d="M44.0 263.1C46.7 265.1 54.3 271.5 60.0 275.2C65.7 278.9 72.2 282.5 78.0 285.2C83.8 288.0 89.3 290.1 95.0 291.7C100.7 293.3 109.2 294.3 112.0 294.8" stroke="#a8c000" stroke-width="1.3" fill="none" opacity="0.9"/><path d="M24.0 240.4C25.0 240.8 26.7 240.5 30.0 242.5C33.3 244.5 41.7 250.7 44.0 252.3" stroke="#d0a000" stroke-width="1.2" fill="none" opacity="0.8"/><path d="M26 242.4L31 245.6L38 252L33 249.8z" fill="#d86400" opacity="0.85"/><path d="M105.8 297.4L118.8 294.6L112 293.6z" fill="#d86808"/><path d="M122.0 291.2C122.7 291.0 121.3 291.5 126.4 290.2C131.5 288.9 145.4 285.2 152.7 283.1C160.0 281.0 164.4 279.4 170.3 277.5C176.2 275.6 182.0 273.1 187.9 271.7C193.8 270.3 199.7 269.4 205.5 269.4C211.3 269.4 217.2 270.4 223.0 271.7C228.8 273.0 234.7 275.4 240.6 277.0C246.5 278.6 253.8 280.4 258.2 281.4C262.6 282.4 265.5 282.7 267.0 283.0" stroke="url(#lfl)" stroke-width="3" fill="none" stroke-linecap="round"/><path d="M152.7 284.5C155.6 283.6 164.4 280.8 170.3 278.9C176.2 277.0 182.0 274.4 187.9 273.1C193.8 271.7 199.7 270.8 205.5 270.8C211.3 270.8 217.2 271.8 223.0 273.1C228.8 274.4 234.7 276.8 240.6 278.4C246.5 280.0 253.8 281.8 258.2 282.8C262.6 283.8 265.5 284.1 267.0 284.4" stroke="#04205c" stroke-width="0.9" fill="none" opacity="0.7"/><path d="M336.0 286.0C336.7 285.8 334.4 286.1 340.0 285.0C345.6 283.9 360.3 281.9 369.6 279.6C378.9 277.3 387.2 274.0 396.0 271.0C404.8 268.0 414.8 264.9 422.5 261.8C430.2 258.7 436.9 255.0 442.3 252.5C447.7 250.0 450.5 247.9 455.0 247.0C459.5 246.1 464.4 246.8 469.4 246.9C474.4 247.0 478.8 246.4 485.2 247.3C491.6 248.2 500.3 249.7 507.9 252.1C515.4 254.5 523.0 258.5 530.5 262.0C538.0 265.5 547.7 270.7 553.0 273.3C558.3 275.9 559.4 277.1 562.2 277.8C565.0 278.5 567.7 276.6 569.7 277.5C571.7 278.4 573.5 282.1 574.2 283.0L574.2 291.4C573.7 292.1 574.7 296.0 571.2 295.9C567.7 295.8 559.8 292.8 553.0 290.6C546.2 288.5 538.0 285.4 530.5 283.0C523.0 280.6 515.4 277.8 507.9 276.3C500.3 274.8 492.8 274.1 485.2 274.0C477.6 273.9 469.8 274.4 462.6 275.5C455.5 276.6 449.0 278.7 442.3 280.3C435.6 281.9 430.2 283.0 422.5 285.0C414.8 287.0 404.8 289.9 396.0 292.2C387.2 294.5 378.4 297.3 369.6 298.8C360.8 300.3 348.8 300.9 343.2 301.4C337.6 301.9 337.2 301.9 336.0 302.0Z" fill="url(#rw)"/><path d="M336.0 286.0C336.7 285.8 334.4 286.1 340.0 285.0C345.6 283.9 360.3 281.9 369.6 279.6C378.9 277.3 387.2 274.0 396.0 271.0C404.8 268.0 414.8 264.9 422.5 261.8C430.2 258.7 436.9 255.0 442.3 252.5C447.7 250.0 450.5 247.9 455.0 247.0C459.5 246.1 464.4 246.8 469.4 246.9C474.4 247.0 478.8 246.4 485.2 247.3C491.6 248.2 500.3 249.7 507.9 252.1C515.4 254.5 523.0 258.5 530.5 262.0C538.0 265.5 547.7 270.7 553.0 273.3C558.3 275.9 559.4 277.1 562.2 277.8C565.0 278.5 567.7 276.6 569.7 277.5C571.7 278.4 573.5 282.1 574.2 283.0L573.0 290.4C572.2 290.3 572.0 291.2 568.2 289.9C564.4 288.6 556.3 284.9 550.0 282.4C543.7 279.9 536.3 276.9 530.5 274.8C524.7 272.7 520.0 271.2 515.0 269.8C510.0 268.4 505.3 267.2 500.3 266.5C495.3 265.8 490.1 265.6 485.0 265.4C479.9 265.2 474.2 265.2 470.0 265.4C465.8 265.6 464.6 265.5 460.0 266.4C455.4 267.3 448.6 269.4 442.3 271.0C436.1 272.6 430.2 274.3 422.5 276.3C414.8 278.3 404.8 281.0 396.0 283.0C387.2 285.0 378.4 286.4 369.6 288.2C360.8 289.9 348.6 292.4 343.0 293.5C337.4 294.6 337.2 294.4 336.0 294.6Z" fill="url(#rwu)"/><path d="M336.0 294.6C337.2 294.4 337.4 294.6 343.0 293.5C348.6 292.4 360.8 289.9 369.6 288.2C378.4 286.4 387.2 285.0 396.0 283.0C404.8 281.0 414.8 278.3 422.5 276.3C430.2 274.3 436.1 272.6 442.3 271.0C448.6 269.4 455.4 267.3 460.0 266.4C464.6 265.5 465.8 265.6 470.0 265.4C474.2 265.2 479.9 265.2 485.0 265.4C490.1 265.6 495.3 265.8 500.3 266.5C505.3 267.2 510.0 268.4 515.0 269.8C520.0 271.2 524.7 272.7 530.5 274.8C536.3 276.9 543.7 279.9 550.0 282.4C556.3 284.9 564.4 288.6 568.2 289.9C572.0 291.2 572.2 290.3 573.0 290.4L574.2 291.4C573.7 292.1 574.7 296.0 571.2 295.9C567.7 295.8 559.8 292.8 553.0 290.6C546.2 288.5 538.0 285.4 530.5 283.0C523.0 280.6 515.4 277.8 507.9 276.3C500.3 274.8 492.8 274.1 485.2 274.0C477.6 273.9 469.8 274.4 462.6 275.5C455.5 276.6 449.0 278.7 442.3 280.3C435.6 281.9 430.2 283.0 422.5 285.0C414.8 287.0 404.8 289.9 396.0 292.2C387.2 294.5 378.4 297.3 369.6 298.8C360.8 300.3 348.8 300.9 343.2 301.4C337.6 301.9 337.2 301.9 336.0 302.0Z" fill="url(#rwl)"/><path d="M336.0 299.2C337.2 299.1 337.6 299.1 343.2 298.6C348.8 298.1 360.8 297.5 369.6 296.0C378.4 294.5 387.2 291.7 396.0 289.4C404.8 287.1 414.8 284.2 422.5 282.2C430.2 280.2 435.6 279.1 442.3 277.5C449.0 275.9 455.5 273.8 462.6 272.7C469.8 271.6 477.6 271.1 485.2 271.2C492.8 271.3 500.3 272.0 507.9 273.5C515.4 275.0 523.0 277.8 530.5 280.2C538.0 282.6 546.2 285.7 553.0 287.8C559.8 289.9 568.2 292.2 571.2 293.1L571.2 295.9C568.2 295.0 559.8 292.8 553.0 290.6C546.2 288.5 538.0 285.4 530.5 283.0C523.0 280.6 515.4 277.8 507.9 276.3C500.3 274.8 492.8 274.1 485.2 274.0C477.6 273.9 469.8 274.4 462.6 275.5C455.5 276.6 449.0 278.7 442.3 280.3C435.6 281.9 430.2 283.0 422.5 285.0C414.8 287.0 404.8 289.9 396.0 292.2C387.2 294.5 378.4 297.3 369.6 298.8C360.8 300.3 348.8 300.9 343.2 301.4C337.6 301.9 337.2 301.9 336.0 302.0Z" fill="url(#rwlb)"/><path d="M343.0 294.4C347.4 293.5 360.8 290.9 369.6 289.2C378.4 287.5 387.2 286.0 396.0 284.0C404.8 282.0 414.8 279.4 422.5 277.4C430.2 275.4 438.8 273.1 442.0 272.2L442.0 276.4C438.8 277.3 430.2 279.5 422.5 281.6C414.8 283.7 404.8 286.7 396.0 289.0C387.2 291.3 378.4 293.8 369.6 295.4C360.8 297.0 347.4 298.2 343.0 298.8Z" fill="url(#rwdk)"/><path d="M336.0 286.0C336.7 285.8 334.4 286.1 340.0 285.0C345.6 283.9 360.3 281.9 369.6 279.6C378.9 277.3 387.2 274.0 396.0 271.0C404.8 268.0 414.8 264.9 422.5 261.8C430.2 258.7 436.9 255.0 442.3 252.5C447.7 250.0 450.5 247.9 455.0 247.0C459.5 246.1 464.4 246.8 469.4 246.9C474.4 247.0 478.8 246.4 485.2 247.3C491.6 248.2 500.3 249.7 507.9 252.1C515.4 254.5 523.0 258.5 530.5 262.0C538.0 265.5 547.7 270.7 553.0 273.3C558.3 275.9 560.7 277.1 562.2 277.8L562.2 279.6C560.7 278.9 558.3 277.9 553.0 275.4C547.7 272.9 538.0 267.8 530.5 264.4C523.0 261.0 515.4 257.3 507.9 255.0C500.3 252.7 491.6 251.3 485.2 250.6C478.8 249.9 474.4 250.4 469.4 250.6C464.4 250.8 459.5 250.7 455.0 251.6C450.5 252.5 447.7 253.9 442.3 256.0C436.9 258.1 430.2 261.5 422.5 264.4C414.8 267.3 404.8 270.5 396.0 273.4C387.2 276.3 378.9 279.5 369.6 281.8C360.3 284.1 345.6 286.0 340.0 287.0C334.4 288.0 336.7 287.8 336.0 288.0Z" fill="url(#rtop)"/><path d="M440 253.7C442.5 252.6 450.3 248.7 455.0 246.9C459.7 245.1 465.8 243.7 468.0 243.1L469.4 247L470 251.2C467.5 251.4 460.0 251.7 455.0 252.6C450.0 253.5 442.5 255.9 440.0 256.6Z" fill="url(#rtop)"/><path d="M336.0 294.6C337.2 294.4 337.4 294.6 343.0 293.5C348.6 292.4 360.8 289.9 369.6 288.2C378.4 286.4 387.2 285.0 396.0 283.0C404.8 281.0 414.8 278.3 422.5 276.3C430.2 274.3 436.1 272.6 442.3 271.0C448.6 269.4 455.4 267.3 460.0 266.4C464.6 265.5 465.8 265.6 470.0 265.4C474.2 265.2 479.9 265.2 485.0 265.4C490.1 265.6 495.3 265.8 500.3 266.5C505.3 267.2 510.0 268.4 515.0 269.8C520.0 271.2 524.7 272.7 530.5 274.8C536.3 276.9 543.7 279.9 550.0 282.4C556.3 284.9 564.4 288.6 568.2 289.9C572.0 291.2 572.2 290.3 573.0 290.4" stroke="url(#rwml)" stroke-width="0.9" fill="none" opacity="0.9"/><path d="M343.0 293.5C347.4 292.6 360.8 289.9 369.6 288.2C378.4 286.4 391.6 283.9 396.0 283.0" stroke="#1468ff" stroke-width="0.9" fill="none"/><path d="M440.0 259.0C442.5 258.1 450.0 254.8 455.0 253.6C460.0 252.4 465.0 252.2 470.0 252.0C475.0 251.8 480.0 252.2 485.0 252.6C490.0 253.0 495.2 253.5 500.0 254.4C504.8 255.3 509.7 256.6 514.0 258.0C518.3 259.4 524.0 261.9 526.0 262.7" stroke="#78e010" stroke-width="0.9" fill="none" opacity="0.9"/><path d="M340.0 285.4C344.9 284.5 360.3 282.3 369.6 280.0C378.9 277.7 391.6 273.0 396.0 271.6" stroke="#0c50e8" stroke-width="1.1" fill="none"/><path d="M561 278.4Q566 276.4 570.2 277.6Q574.6 282 574.2 291.4L571.2 296L566 289z" fill="#8c9810"/><path d="M568 291L573.8 287L574.2 291.4L571.2 296z" fill="#e07000"/><path d="M262.8 222.5C264.3 222.4 268.9 222.0 272.0 222.2C275.1 222.4 276.4 222.2 281.5 223.5C286.6 224.8 296.1 227.1 302.3 229.7C308.5 232.3 314.4 235.4 318.9 239.0C323.4 242.6 326.8 247.7 329.2 251.5C331.6 255.3 332.1 258.9 333.0 262.0C333.9 265.1 333.3 266.8 334.4 270.2C335.5 273.6 337.5 278.8 339.6 282.6C341.7 286.4 346.5 289.7 346.9 293.0C347.2 296.3 345.0 299.4 341.7 302.3C338.4 305.2 332.0 309.1 327.2 310.6C322.4 312.1 317.8 312.2 312.6 311.3C307.4 310.4 301.2 307.8 296.0 305.4C290.8 303.0 286.3 301.2 281.5 297.1C276.7 293.0 270.4 286.5 267.0 280.6C263.6 274.7 262.0 268.5 260.8 261.9C259.6 255.3 259.4 247.7 259.7 241.1C260.0 234.5 262.3 225.6 262.8 222.5Z" fill="#050c42"/><path d="M264 271.6C263.9 267.8 262.9 255.0 263.4 249.0C263.9 243.0 265.1 239.0 267.0 235.8C268.9 232.6 271.1 231.3 274.5 230.0C277.9 228.7 282.3 227.6 287.7 227.8C293.1 228.0 301.4 229.1 306.6 231.0C311.8 232.9 315.2 235.5 318.9 239.0C322.6 242.5 326.3 247.3 328.6 252.0C330.9 256.7 334.0 264.8 332.6 267.0C331.2 269.2 325.4 265.4 320.0 265.0C314.6 264.6 305.7 263.9 300.0 264.4C294.3 264.9 290.0 265.7 286.0 268.0C282.0 270.3 278.3 274.7 276.0 278.0C273.7 281.3 274.0 289.1 272.0 288.0C270.0 286.9 265.3 274.3 264.0 271.6Z" fill="url(#fus)"/><path d="M270.0 282.0C271.0 280.3 273.1 274.8 276.0 272.0C278.9 269.2 282.7 266.6 287.7 265.0C292.7 263.4 299.7 262.5 306.0 262.4C312.3 262.3 320.9 263.3 325.5 264.6C330.1 265.9 332.2 269.1 333.6 270.0" stroke="#050c40" stroke-width="4" fill="none" opacity="0.85" filter="url(#b2)"/><path d="M285.4 300C284.7 298.3 281.7 293.2 281.0 290.0C280.3 286.8 280.6 283.6 281.0 281.0C281.4 278.4 282.5 276.5 283.6 274.6C284.7 272.7 285.6 271.0 287.7 269.7C289.8 268.4 292.9 267.6 296.0 267.0C299.1 266.4 302.9 266.0 306.6 266.0C310.3 266.0 314.6 266.4 318.0 267.0C321.4 267.6 324.0 267.9 327.0 269.6C330.0 271.3 333.9 274.8 336.0 277.0C338.1 279.2 340.6 280.5 339.6 283.0C338.6 285.5 334.9 289.8 330.0 292.0C325.1 294.2 317.4 294.7 310.0 296.0C302.6 297.3 289.5 299.3 285.4 300.0Z" fill="#0c2ca8"/><path d="M267 275C267.8 277.2 269.6 284.4 272.0 288.0C274.4 291.6 278.5 294.2 281.5 296.4C284.5 298.6 288.6 300.2 290.0 301.0L284 290L279 279Z" fill="#0a2490" opacity="0.9"/><path d="M284.6 297.1C284.4 295.1 282.6 288.7 283.6 284.8C284.6 280.9 286.8 276.1 290.6 273.5C294.4 270.9 300.8 269.5 306.6 269.3C312.4 269.1 320.5 270.6 325.5 272.5C330.5 274.4 333.6 277.8 336.8 281.0C340.1 284.2 344.3 288.6 345.0 292.0C345.7 295.4 344.0 298.6 341.0 301.6C338.0 304.6 331.9 308.3 327.2 309.8C322.5 311.3 317.6 311.2 312.6 310.4C307.6 309.6 301.7 307.2 297.0 305.0C292.3 302.8 286.7 298.4 284.6 297.1Z" fill="url(#cow)"/><path d="M266.0 279.0C265.7 277.8 264.4 276.6 264.0 271.6C263.6 266.6 262.9 255.0 263.4 249.0C263.9 243.0 265.1 239.0 267.0 235.8C268.9 232.6 271.1 231.3 274.5 230.0C277.9 228.7 282.3 227.6 287.7 227.8C293.1 228.0 302.2 229.8 306.6 231.0C311.0 232.2 312.8 234.2 314.0 234.8" stroke="#1468ff" stroke-width="1" fill="none"/><path d="M260.4 255.0C260.3 253.7 259.9 250.3 259.9 247.0C259.9 243.7 260.1 238.8 260.4 235.0C260.7 231.2 260.4 226.5 261.7 224.4C263.0 222.3 264.9 222.7 268.0 222.6C271.1 222.5 276.0 223.2 280.0 223.8C284.0 224.4 290.0 226.0 292.0 226.4" stroke="#1050e0" stroke-width="0.9" fill="none"/><path d="M285.2 299.0C285.0 298.5 284.3 298.4 284.0 296.0C283.7 293.6 282.5 288.6 283.6 284.8C284.7 281.1 286.8 276.1 290.6 273.5C294.4 270.9 300.8 269.5 306.6 269.3C312.4 269.1 320.5 270.6 325.5 272.5C330.5 274.4 334.9 279.6 336.8 281.0" stroke="#1468ff" stroke-width="1" fill="none"/><path d="M302.2 292.6Q303.4 286.4 312 284.8L329 284.2Q340.6 287.2 346.8 293Q346 299 338.4 301L322 302.8Q307.6 301.8 302.2 292.6z" fill="#0e3cf4"/><path d="M303.4 294.6Q309 301 322 302L338 300.6Q344.4 299 346.4 294.6" stroke="#0a26b4" stroke-width="1.6" fill="none" opacity="0.75"/></g></svg>
</body></html>
